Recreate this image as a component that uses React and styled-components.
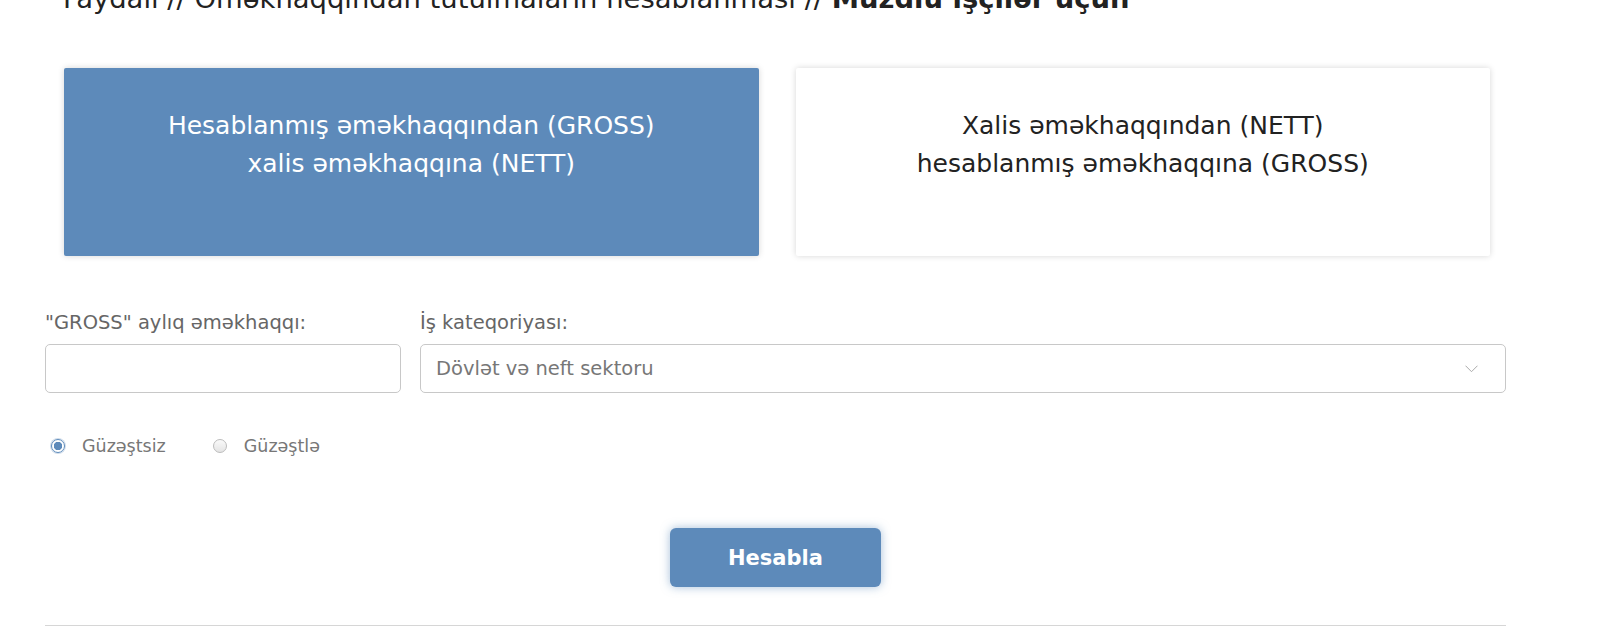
import React from 'react'
import styled, { createGlobalStyle } from 'styled-components'

const Global = createGlobalStyle`
  body {
    margin: 0;
    background: #fff;
    font-family: 'DejaVu Sans', 'Open Sans', sans-serif;
    overflow: hidden;
  }
`

const Page = styled.main`
  width: 1461px;
  padding-left: 45px;
`

const Crumbs = styled.h2`
  margin: -18px 0 0 18px;
  font-size: 27.4px;
  line-height: 34px;
  font-weight: 400;
  color: #222;
  white-space: nowrap;
  b {
    font-weight: 700;
  }
`

const Cards = styled.div`
  display: grid;
  grid-template-columns: 1fr 1fr;
  gap: 37px;
  padding: 0 16px 0 19px;
  margin-top: 52px;
`

const Card = styled.button`
  height: 188px;
  border: 0;
  border-radius: 2px;
  padding: 39px 10px 0;
  text-align: center;
  display: flex;
  flex-direction: column;
  align-items: center;
  font-family: inherit;
  font-size: 25px;
  line-height: 38px;
  white-space: nowrap;
  cursor: pointer;
  background: ${p => (p.$active ? '#5d8aba' : '#fff')};
  color: ${p => (p.$active ? '#fff' : '#222')};
  box-shadow: 0 0 6px rgba(0, 0, 0, 0.16);
`

const Fields = styled.div`
  display: grid;
  grid-template-columns: 356px 1fr;
  gap: 19px;
  margin-top: 56px;
`

const Field = styled.label`
  display: flex;
  flex-direction: column;
  gap: 11px;
`

const Label = styled.span`
  font-size: 19.5px;
  line-height: 21px;
  color: #666;
  white-space: nowrap;
`

const Input = styled.input`
  box-sizing: border-box;
  height: 49px;
  border: 1px solid #c8c8c8;
  border-radius: 5px;
  padding: 0 15px;
  font: inherit;
  font-size: 19px;
  outline: none;
`

const SelectBox = styled.div`
  box-sizing: border-box;
  height: 49px;
  border: 1px solid #c8c8c8;
  border-radius: 5px;
  padding: 0 27px 0 15px;
  display: flex;
  align-items: center;
  justify-content: space-between;
  font-size: 19.5px;
  color: #777;
`

const Radios = styled.div`
  display: flex;
  gap: 47px;
  margin-top: 43px;
  padding-left: 6px;
  height: 20px;
  align-items: center;
`

const RadioItem = styled.label`
  display: flex;
  align-items: center;
  gap: 17px;
  font-size: 17.5px;
  color: #777;
`

const Dot = styled.span`
  box-sizing: border-box;
  width: 14px;
  height: 14px;
  border-radius: 50%;
  border: 1px solid ${p => (p.$on ? '#5d8aba' : '#bcbcbc')};
  background: ${p =>
    p.$on
      ? 'radial-gradient(circle, #5d8aba 0 4px, #fff 4.5px)'
      : 'linear-gradient(#fafafa, #e4e4e4)'};
  box-shadow: ${p => (p.$on ? '0 0 0 1px #cfdcea' : 'none')};
`

const Actions = styled.div`
  display: flex;
  justify-content: center;
  margin-top: 72px;
`

const Submit = styled.button`
  width: 211px;
  height: 59px;
  border: 0;
  border-radius: 6px;
  background: #5d8aba;
  color: #fff;
  font-family: inherit;
  font-weight: 700;
  font-size: 21px;
  box-shadow: 0 0 10px rgba(93, 138, 186, 0.55);
  cursor: pointer;
`

const Divider = styled.hr`
  margin: 38px 0 0;
  border: 0;
  border-top: 1px solid #d6d6d6;
`

export default function App() {
  return (
    <>
      <Global />
      <Page>
        <Crumbs>
          Faydalı // Əməkhaqqından tutulmaların hesablanması // <b>Muzdlu işçilər üçün</b>
        </Crumbs>
        <Cards>
          <Card $active>
            <span>Hesablanmış əməkhaqqından (GROSS)</span>
            <span>xalis əməkhaqqına (NETT)</span>
          </Card>
          <Card>
            <span>Xalis əməkhaqqından (NETT)</span>
            <span>hesablanmış əməkhaqqına (GROSS)</span>
          </Card>
        </Cards>
        <Fields>
          <Field>
            <Label>"GROSS" aylıq əməkhaqqı:</Label>
            <Input />
          </Field>
          <Field>
            <Label>İş kateqoriyası:</Label>
            <SelectBox>
              <span>Dövlət və neft sektoru</span>
              <svg width="13" height="8" viewBox="0 0 13 8">
                <path d="M0.5 0.7 L6.5 6.7 L12.5 0.7" fill="none" stroke="#aaa" strokeWidth="1" />
              </svg>
            </SelectBox>
          </Field>
        </Fields>
        <Radios>
          <RadioItem>
            <Dot $on />
            Güzəştsiz
          </RadioItem>
          <RadioItem>
            <Dot />
            Güzəştlə
          </RadioItem>
        </Radios>
        <Actions>
          <Submit>Hesabla</Submit>
        </Actions>
        <Divider />
      </Page>
    </>
  )
}
